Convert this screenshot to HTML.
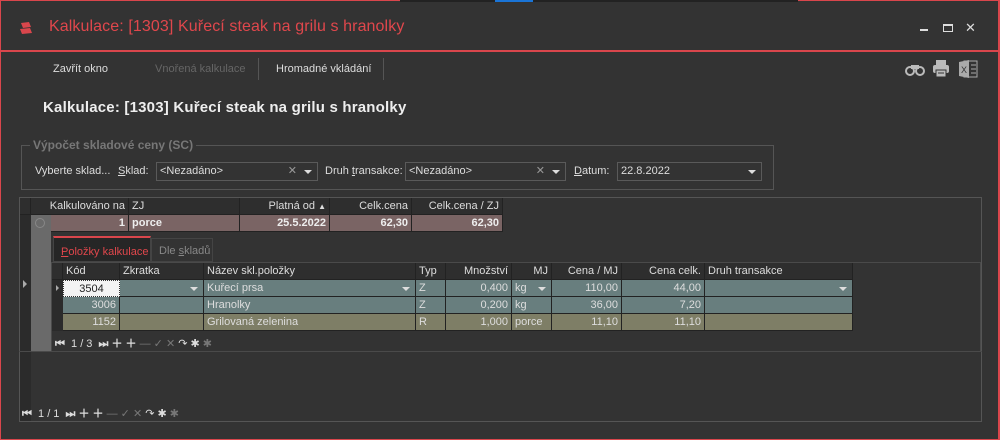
<!DOCTYPE html><html><head><meta charset="utf-8"><style>
*{margin:0;padding:0;box-sizing:border-box}
body{width:1000px;height:440px;background:#333;font-family:"Liberation Sans",sans-serif;font-size:11px;color:#ddd;position:relative;overflow:hidden}
.a{position:absolute;white-space:nowrap}
.b{position:absolute;border:1px solid #555}
.cell{position:absolute;height:17px;line-height:16px;padding:0 3px;overflow:hidden;border-right:1px solid #222;border-bottom:1px solid #222}
.r{text-align:right}
.combo{position:absolute;height:19px;border:1px solid #5a5a5a;background:#333;line-height:17px;padding-left:3px;color:#ddd}
.arr{position:absolute;right:5px;top:7px;width:0;height:0;border-left:4px solid transparent;border-right:4px solid transparent;border-top:4px solid #ddd}
.nav{position:absolute;font-size:11px;color:#ddd;letter-spacing:0}
</style></head><body>
<div class="a" style="left:0;top:0;width:1000px;height:440px;border:1px solid #d9464c;border-right:2px solid #d9464c"></div>
<div class="a" style="left:400px;top:0;width:95px;height:2px;background:#222"></div>
<div class="a" style="left:495px;top:0;width:38px;height:2px;background:#1a74d6"></div>
<div class="a" style="left:533px;top:0;width:265px;height:2px;background:#222"></div>
<div class="a" style="left:0;top:50px;width:1000px;height:2px;background:#d9464c"></div>
<svg class="a" style="left:19px;top:21px" width="14" height="14" viewBox="0 0 14 14"><path d="M2 2 L10 1 L12 6 L4 7Z" fill="#d9464c"/><path d="M1 8 L11 7 L13 12 L3 13Z" fill="#d9464c"/></svg>
<div class="a" style="left:49px;top:18px;font-size:16px;letter-spacing:0.1px;color:#e0474c">Kalkulace: [1303] Kuřecí steak na grilu s hranolky</div>
<div class="a" style="left:920px;top:29px;width:8px;height:2px;background:#ddd"></div>
<div class="a" style="left:943px;top:24px;width:10px;height:8px;border:1px solid #ddd;border-top-width:2px"></div>
<div class="a" style="left:965px;top:20px;font-size:13px;color:#ddd">✕</div>
<div class="a" style="left:53px;top:63px">Zavřít okno</div>
<div class="a" style="left:155px;top:63px;color:#666">Vnořená kalkulace</div>
<div class="a" style="left:258px;top:58px;width:1px;height:22px;background:#555"></div>
<div class="a" style="left:276px;top:63px">Hromadné vkládání</div>
<div class="a" style="left:383px;top:58px;width:1px;height:22px;background:#555"></div>
<svg class="a" style="left:905px;top:62px" width="20" height="14"><circle cx="5" cy="9" r="4" fill="none" stroke="#bbb" stroke-width="2"/><circle cx="15" cy="9" r="4" fill="none" stroke="#bbb" stroke-width="2"/><rect x="6" y="3" width="8" height="4" fill="#bbb"/></svg>
<svg class="a" style="left:932px;top:59px" width="18" height="19"><rect x="4" y="1" width="10" height="5" fill="#bbb"/><rect x="1" y="6" width="16" height="8" rx="2" fill="#bbb"/><rect x="4" y="11" width="10" height="7" fill="#bbb" stroke="#333"/><line x1="6" y1="14" x2="12" y2="14" stroke="#333"/></svg>
<svg class="a" style="left:958px;top:59px" width="20" height="20"><rect x="6" y="2" width="13" height="16" fill="none" stroke="#aaa"/><path d="M1 3 L11 1 L11 19 L1 17Z" fill="#aaa"/><text x="3" y="14" font-size="9" fill="#333" font-family="Liberation Sans">X</text><line x1="13" y1="6" x2="18" y2="6" stroke="#aaa"/><line x1="13" y1="10" x2="18" y2="10" stroke="#aaa"/><line x1="13" y1="14" x2="18" y2="14" stroke="#aaa"/></svg>
<div class="a" style="left:43px;top:99px;font-size:15px;font-weight:bold;letter-spacing:0.2px;color:#eee">Kalkulace: [1303] Kuřecí steak na grilu s hranolky</div>
<div class="b" style="left:21px;top:145px;width:753px;height:45px"></div>
<div class="a" style="left:30px;top:138px;padding:0 3px;background:#333;font-weight:bold;font-size:12px;color:#777">Výpočet skladové ceny (SC)</div>
<div class="a" style="left:35px;top:165px">Vyberte sklad...</div>
<div class="a" style="left:118px;top:165px"><u>S</u>klad:</div>
<div class="combo" style="left:156px;top:162px;width:162px">&lt;Nezadáno&gt;<span class="a" style="right:20px;top:0;color:#999">✕</span><span class="arr"></span></div>
<div class="a" style="left:325px;top:165px">Druh <u>t</u>ransakce:</div>
<div class="combo" style="left:405px;top:162px;width:161px">&lt;Nezadáno&gt;<span class="a" style="right:20px;top:0;color:#999">✕</span><span class="arr"></span></div>
<div class="a" style="left:574px;top:165px"><u>D</u>atum:</div>
<div class="combo" style="left:617px;top:162px;width:145px">22.8.2022<span class="arr"></span></div>
<!-- main grid -->
<div class="b" style="left:19px;top:197px;width:963px;height:225px;border-color:#555"></div>
<div class="a" style="left:20px;top:198px;width:483px;height:17px;background:#2e2e2e"></div>
<div class="cell" style="left:20px;top:198px;width:11px"></div>
<div class="cell r" style="left:31px;top:198px;width:98px">Kalkulováno na</div>
<div class="cell" style="left:129px;top:198px;width:111px">ZJ</div>
<div class="cell r" style="left:240px;top:198px;width:90px">Platná od <span style="font-size:8px">▲</span></div>
<div class="cell r" style="left:330px;top:198px;width:82px">Celk.cena</div>
<div class="cell r" style="left:412px;top:198px;width:91px">Celk.cena / ZJ</div>
<div class="a" style="left:20px;top:215px;width:11px;height:206px;background:#2b2b2b"></div>
<div class="a" style="left:31px;top:215px;width:20px;height:137px;background:#6a6a6a"></div>
<div class="a" style="left:51px;top:215px;width:452px;height:17px;background:#7a6464"></div>
<div class="a" style="left:35px;top:218px;width:10px;height:10px;border:1px solid #888;border-radius:50%"></div>
<div class="cell r" style="left:51px;top:215px;width:78px;font-weight:bold;color:#eee">1</div>
<div class="cell" style="left:129px;top:215px;width:111px;font-weight:bold;color:#eee">porce</div>
<div class="cell r" style="left:240px;top:215px;width:90px;font-weight:bold;color:#eee">25.5.2022</div>
<div class="cell r" style="left:330px;top:215px;width:82px;font-weight:bold;color:#eee">62,30</div>
<div class="cell r" style="left:412px;top:215px;width:91px;font-weight:bold;color:#eee">62,30</div>
<div class="a" style="left:23px;top:280px;width:0;height:0;border-top:4px solid transparent;border-bottom:4px solid transparent;border-left:4px solid #aaa"></div>
<!-- tabs -->
<div class="a" style="left:51px;top:232px;width:930px;height:120px;background:#333"></div>
<div class="a" style="left:53px;top:236px;width:98px;height:26px;background:#262626;border:1px solid #444;border-top:2px solid #d9464c;color:#e0474c;padding:8px 0 0 7px"><u>P</u>oložky kalkulace</div>
<div class="a" style="left:151px;top:238px;width:62px;height:24px;border:1px solid #444;color:#888;padding:6px 0 0 7px">Dle <u>s</u>kladů</div>
<div class="b" style="left:51px;top:262px;width:930px;height:90px;border-color:#4a4a4a"></div>
<div class="a" style="left:52px;top:263px;width:801px;height:17px;background:#2e2e2e"></div>
<div class="cell" style="left:52px;top:263px;width:11px"></div>
<div class="cell" style="left:63px;top:263px;width:57px">Kód</div>
<div class="cell" style="left:120px;top:263px;width:84px">Zkratka</div>
<div class="cell" style="left:204px;top:263px;width:212px">Název skl.položky</div>
<div class="cell" style="left:416px;top:263px;width:30px">Typ</div>
<div class="cell r" style="left:446px;top:263px;width:66px">Množství</div>
<div class="cell r" style="left:512px;top:263px;width:40px">MJ</div>
<div class="cell r" style="left:552px;top:263px;width:70px">Cena / MJ</div>
<div class="cell r" style="left:622px;top:263px;width:83px">Cena celk.</div>
<div class="cell" style="left:705px;top:263px;width:148px">Druh transakce</div>
<div class="a" style="left:52px;top:280px;width:11px;height:51px;background:#2b2b2b"></div>
<div class="a" style="left:56px;top:285px;width:0;height:0;border-top:3px solid transparent;border-bottom:3px solid transparent;border-left:3px solid #aaa"></div>
<div class="a" style="left:63px;top:280px;width:790px;height:34px;background:#687e7e"></div>
<div class="a" style="left:63px;top:314px;width:790px;height:17px;background:#7e7e66"></div>
<div class="cell" style="left:63px;top:280px;width:57px;background:#f4f4f4;color:#222;border:1px dotted #333;text-align:center">3504</div>
<div class="cell" style="left:120px;top:280px;width:84px"><span class="arr"></span></div>
<div class="cell" style="left:204px;top:280px;width:212px">Kuřecí prsa<span class="arr"></span></div>
<div class="cell" style="left:416px;top:280px;width:30px">Z</div>
<div class="cell r" style="left:446px;top:280px;width:66px">0,400</div>
<div class="cell" style="left:512px;top:280px;width:40px">kg<span class="arr"></span></div>
<div class="cell r" style="left:552px;top:280px;width:70px">110,00</div>
<div class="cell r" style="left:622px;top:280px;width:83px">44,00</div>
<div class="cell" style="left:705px;top:280px;width:148px"><span class="arr"></span></div>
<div class="cell r" style="left:63px;top:297px;width:57px">3006</div>
<div class="cell" style="left:120px;top:297px;width:84px"></div>
<div class="cell" style="left:204px;top:297px;width:212px">Hranolky</div>
<div class="cell" style="left:416px;top:297px;width:30px">Z</div>
<div class="cell r" style="left:446px;top:297px;width:66px">0,200</div>
<div class="cell" style="left:512px;top:297px;width:40px">kg</div>
<div class="cell r" style="left:552px;top:297px;width:70px">36,00</div>
<div class="cell r" style="left:622px;top:297px;width:83px">7,20</div>
<div class="cell" style="left:705px;top:297px;width:148px"></div>
<div class="cell r" style="left:63px;top:314px;width:57px">1152</div>
<div class="cell" style="left:120px;top:314px;width:84px"></div>
<div class="cell" style="left:204px;top:314px;width:212px">Grilovaná zelenina</div>
<div class="cell" style="left:416px;top:314px;width:30px">R</div>
<div class="cell r" style="left:446px;top:314px;width:66px">1,000</div>
<div class="cell" style="left:512px;top:314px;width:40px">porce</div>
<div class="cell r" style="left:552px;top:314px;width:70px">11,10</div>
<div class="cell r" style="left:622px;top:314px;width:83px">11,10</div>
<div class="cell" style="left:705px;top:314px;width:148px"></div>
<div class="nav a" style="left:55px;top:335px"><b>⏮</b>&nbsp; 1 / 3 &nbsp;<b>⏭ ＋ ＋</b> <span style="color:#777">— ✓ ✕</span> ↷ ✱ <span style="color:#777">✱</span></div>
<div class="a" style="left:19px;top:351px;width:963px;height:1px;background:#4a4a4a"></div>
<div class="nav a" style="left:22px;top:405px"><b>⏮</b>&nbsp; 1 / 1 &nbsp;<b>⏭ ＋ ＋</b> <span style="color:#777">— ✓ ✕</span> ↷ ✱ <span style="color:#777">✱</span></div>
</body></html>
